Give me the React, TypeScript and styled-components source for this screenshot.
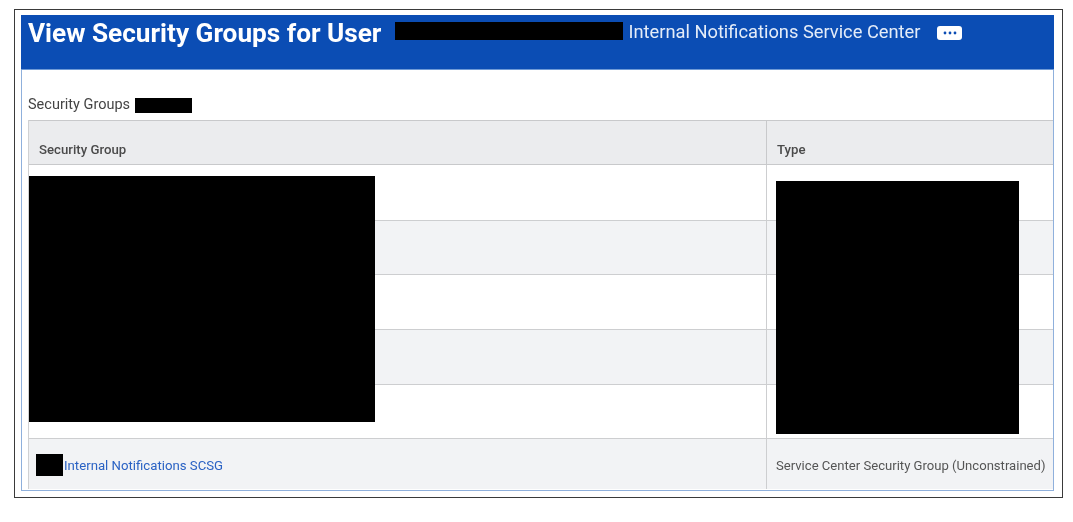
import styled, { createGlobalStyle } from "styled-components";

const rows = [
  { height: 56 },
  { height: 54, shaded: true },
  { height: 55 },
  { height: 55, shaded: true },
  { height: 54 },
];

const App = () => {
  return (
    <>
      <GlobalStyle />
      <Frame>
        <Panel>
          <Header>
            <Title>View Security Groups for User</Title>
            <TitleRedaction />
            <Subtitle>Internal Notifications Service Center</Subtitle>
            <MoreButton aria-label="More">
              <svg width="14" height="4" viewBox="0 0 14 4">
                <circle cx="2" cy="2" r="1.4" fill="#0b4db4" />
                <circle cx="7" cy="2" r="1.4" fill="#0b4db4" />
                <circle cx="12" cy="2" r="1.4" fill="#0b4db4" />
              </svg>
            </MoreButton>
          </Header>
          <Caption>
            <CaptionText>Security Groups</CaptionText>
            <CaptionRedaction />
          </Caption>
          <Table>
            <HeadRow>
              <HeadCell>Security Group</HeadCell>
              <HeadCell>Type</HeadCell>
            </HeadRow>
            {rows.map((row, i) => (
              <Row key={i} $height={row.height} $shaded={row.shaded}>
                <Cell />
                <Cell />
              </Row>
            ))}
            <LastRow>
              <LinkCell>
                <LinkRedaction />
                <GroupLink href="#">Internal Notifications SCSG</GroupLink>
              </LinkCell>
              <TypeCell>Service Center Security Group (Unconstrained)</TypeCell>
            </LastRow>
            <NameBlock />
            <TypeBlock />
          </Table>
        </Panel>
      </Frame>
    </>
  );
};

const GlobalStyle = createGlobalStyle`
  html, body {
    margin: 0;
    padding: 0;
    background: #fff;
    overflow: hidden;
  }
  body {
    font-family: Roboto, "Liberation Sans", sans-serif;
  }
`;

const Frame = styled.div`
  box-sizing: border-box;
  width: 1049px;
  height: 489px;
  margin: 9px 0 0 14px;
  padding: 5px 7px 6px 6px;
  border: 1px solid #3a3a3a;
  background: #fff;
`;

const Panel = styled.div`
  box-sizing: border-box;
  height: 476px;
  width: 1033px;
  border: 1px solid #8fb0dc;
  border-top: none;
  background: #fff;
  filter: blur(0.5px);
`;

const Header = styled.div`
  box-sizing: border-box;
  display: flex;
  align-items: flex-start;
  height: 55px;
  margin: 0 -1px;
  padding: 3px 0 0 7px;
  background: #0b4db4;
  border-bottom: 1px solid #6f9ad6;
  color: #fff;
`;

const Title = styled.h1`
  margin: 0;
  font-size: 26.2px;
  line-height: 30px;
  font-weight: 700;
  white-space: nowrap;
`;

const TitleRedaction = styled.span`
  width: 228px;
  height: 18px;
  margin: 4px 0 0 14px;
  background: #000;
`;

const Subtitle = styled.span`
  margin-left: 5px;
  font-size: 18.3px;
  line-height: 28px;
  color: #e4ecf8;
  white-space: nowrap;
`;

const MoreButton = styled.div`
  display: flex;
  align-items: center;
  justify-content: center;
  width: 25px;
  height: 14px;
  margin: 8px 0 0 17px;
  border-radius: 3px;
  background: #fff;
`;

const Caption = styled.div`
  display: flex;
  align-items: center;
  height: 50px;
  box-sizing: border-box;
  padding: 18px 0 0 6px;
  color: #444;
`;

const CaptionText = styled.span`
  font-size: 14.5px;
  line-height: 17px;
`;

const CaptionRedaction = styled.span`
  width: 57px;
  height: 15px;
  margin: 2px 0 0 5px;
  background: #000;
`;

const Table = styled.div`
  position: relative;
  margin-left: 6px;
  border-left: 1px solid #d0d1d3;
`;

const HeadRow = styled.div`
  box-sizing: border-box;
  display: grid;
  grid-template-columns: 737px 1fr;
  height: 45px;
  background: #ebecee;
  border-top: 1px solid #c8c9cb;
  border-bottom: 1px solid #c8c9cb;
`;

const HeadCell = styled.div`
  box-sizing: border-box;
  padding: 20px 0 0 10px;
  font-size: 13.2px;
  line-height: 17px;
  font-weight: 500;
  color: #4a4a4a;
  & + & {
    border-left: 1px solid #c8c9cb;
  }
`;

const Row = styled.div<{ $height: number; $shaded?: boolean }>`
  box-sizing: border-box;
  display: grid;
  grid-template-columns: 737px 1fr;
  height: ${(p) => p.$height}px;
  background: ${(p) => (p.$shaded ? "#f2f3f5" : "#fff")};
  border-bottom: 1px solid #cdced0;
`;

const Cell = styled.div`
  & + & {
    border-left: 1px solid #cdced0;
  }
`;

const LastRow = styled.div`
  box-sizing: border-box;
  display: grid;
  grid-template-columns: 737px 1fr;
  height: 50px;
  background: #f2f3f5;
`;

const LinkCell = styled.div`
  display: flex;
  align-items: center;
  padding: 2px 0 0 7px;
`;

const LinkRedaction = styled.span`
  width: 27px;
  height: 22px;
  margin-right: 1px;
  background: #000;
`;

const GroupLink = styled.a`
  font-size: 13.2px;
  color: #2a62c4;
  text-decoration: none;
`;

const TypeCell = styled.div`
  display: flex;
  align-items: center;
  padding: 2px 0 0 9px;
  border-left: 1px solid #cdced0;
  font-size: 13.1px;
  color: #555;
  white-space: nowrap;
`;

// redaction bars laid over the table rows
const NameBlock = styled.div`
  position: absolute;
  left: 0;
  top: 56px;
  width: 346px;
  height: 246px;
  background: #000;
`;

const TypeBlock = styled.div`
  position: absolute;
  left: 747px;
  top: 61px;
  width: 243px;
  height: 253px;
  background: #000;
`;

export default App;
